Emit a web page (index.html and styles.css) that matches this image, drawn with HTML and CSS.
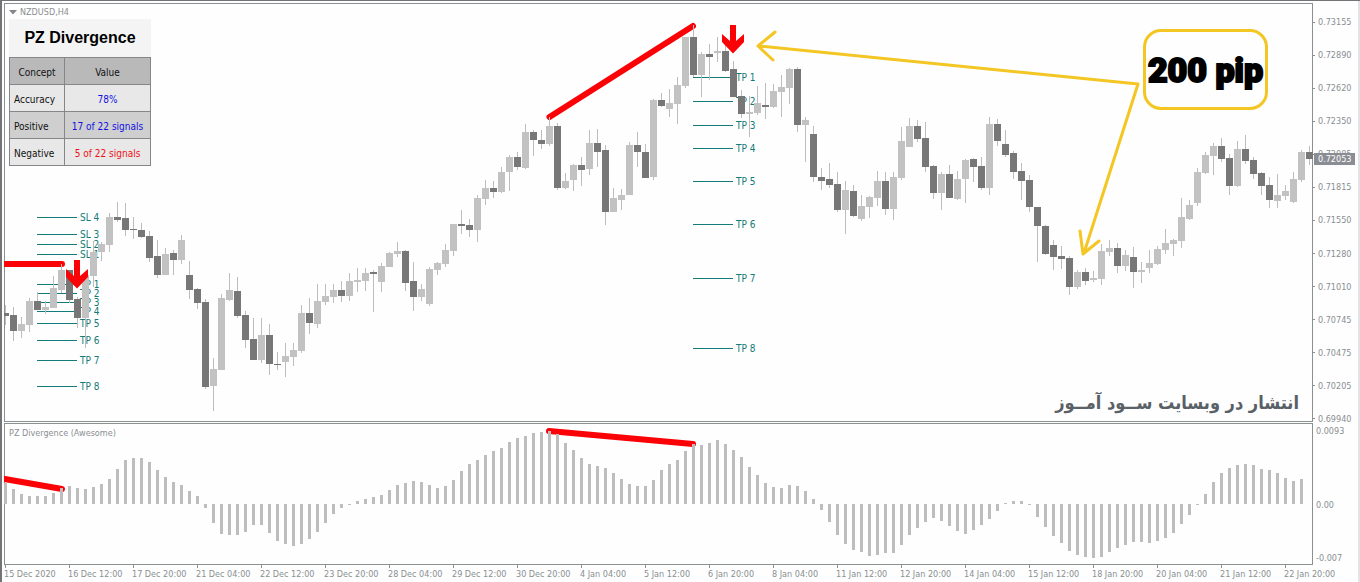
FILE: index.html
```html
<!DOCTYPE html>
<html lang="en">
<head>
<meta charset="utf-8">
<title>NZDUSD,H4</title>
<link rel="stylesheet" href="styles.css">
</head>
<body>
<main class="window">
  <section class="panel price-panel">
    <div class="levels" id="levels"></div>
    <svg class="plot" id="price" viewBox="4 3 1309 419" preserveAspectRatio="none" aria-hidden="true">
      <g class="trend"><path d="M2 264H62M549.500 117L693 26"/></g>
      <g id="candles" shape-rendering="crispEdges"></g>
      <g class="signal">
        <path d="M730 25h6v16l8-7v8L733 53.500L722 42v-8l8 7z"/>
        <path d="M74 260h6v16l8-7v8L77 288.500L66 277v-8l8 7z"/>
      </g>
      <g class="pointer"><path d="M1138 84L759 46M775 32L758 46L773 60M1138 84L1084 253M1080 231L1083 254L1099 241"/></g>
    </svg>
    <div class="overlay">
      <div class="symbol"><svg width="8" height="5" viewBox="0 0 8 5" aria-hidden="true"><path d="M0 0h8L4 4.500z"/></svg>NZDUSD,H4</div>
      <table class="stats">
        <caption>PZ Divergence</caption>
        <thead><tr><th scope="col">Concept</th><th scope="col">Value</th></tr></thead>
        <tbody>
          <tr><td>Accuracy</td><td class="good">78%</td></tr>
          <tr class="alt"><td>Positive</td><td class="good">17 of 22 signals</td></tr>
          <tr><td>Negative</td><td class="bad">5 of 22 signals</td></tr>
        </tbody>
      </table>
    </div>
    <div class="callout">200 pip</div>
    <p class="watermark" lang="fa" dir="rtl">انتشار در وبسایت ســود آمــوز</p>
  </section>
  <div class="price-axis">
    <span>0.73155</span><span>0.72890</span><span>0.72620</span><span>0.72350</span><span>0.72085</span><span>0.71815</span><span>0.71550</span><span>0.71280</span><span>0.71010</span><span>0.70745</span><span>0.70475</span><span>0.70205</span><span>0.69940</span>
    <b class="current">0.72053</b>
  </div>
  <section class="panel osc-panel">
    <svg class="plot" viewBox="4 423 1309 142" preserveAspectRatio="none" aria-hidden="true">
      <g class="trend"><path d="M2 478.500L62 489M549 431L693 444"/></g>
      <g id="bars" shape-rendering="crispEdges"></g>
    </svg>
    <div class="overlay osc-title">PZ Divergence (Awesome)</div>
  </section>
  <div class="osc-axis"><span>0.0093</span><span>0.00</span><span>-0.007</span></div>
  <div class="time-axis">
    <span>15 Dec 2020</span><span>16 Dec 12:00</span><span>17 Dec 20:00</span><span>21 Dec 04:00</span><span>22 Dec 12:00</span><span>23 Dec 20:00</span><span>28 Dec 04:00</span><span>29 Dec 12:00</span><span>30 Dec 20:00</span><span>4 Jan 04:00</span><span>5 Jan 12:00</span><span>6 Jan 20:00</span><span>8 Jan 04:00</span><span>11 Jan 12:00</span><span>12 Jan 20:00</span><span>14 Jan 04:00</span><span>15 Jan 12:00</span><span>18 Jan 20:00</span><span>20 Jan 04:00</span><span>21 Jan 12:00</span><span>22 Jan 20:00</span>
  </div>
</main>
<script src="chart.js"></script>
</body>
</html>
```
FILE: styles.css
```css
* { box-sizing: border-box; }

body {
  margin: 0;
  background: #fefefe;
  color: #8a8e92;
  font: 9px/12px "DejaVu Sans Condensed", "Noto Sans", sans-serif;
}

.window {
  display: grid;
  grid-template-columns: minmax(0, 1fr) 47px;
  grid-template-rows: minmax(0, 419fr) minmax(0, 142fr) 16px;
  row-gap: 1px;
  height: 100vh;
  padding: 2px 0 0 2px;
  border: solid #737378;
  border-width: 1px 0 0 2px;
  box-shadow: inset -2px 0 0 #e4e4e8;
}

.panel {
  position: relative;
  border: 1px solid #8b9090;
}

.panel,
.price-axis,
.osc-axis { min-height: 0; }

.plot,
.levels {
  position: absolute;
  top: -1px;
  left: -1px;
  width: calc(100% + 2px);
  height: calc(100% + 2px);
}

.plot { overflow: hidden; }

.up { fill: #c2c2c2; }
.down { fill: #777; }
.wick { fill: #bdbdbd; }
.bar { fill: #bdbdbd; }

.trend path {
  fill: none;
  stroke: #fb0207;
  stroke-width: 6;
  stroke-linecap: round;
}

.signal path { fill: #fb0207; }

.pointer path {
  fill: none;
  stroke: #f3c623;
  stroke-width: 3;
  stroke-linecap: round;
  stroke-linejoin: round;
}

.level {
  position: absolute;
  display: flex;
  align-items: center;
  gap: 3px;
  height: 13px;
  margin-top: -6px;
  color: #137b74;
  font-size: 10px;
  line-height: 13px;
  white-space: nowrap;
}

.level i {
  flex: none;
  width: 40px;
  height: 1px;
  background: #137b7b;
}

.overlay {
  position: relative;
  padding: 2px 4px;
}

.symbol {
  display: flex;
  align-items: center;
  gap: 3px;
  height: 12px;
}

.symbol path { fill: #85858a; }

.stats {
  width: 142px;
  margin-top: 1px;
  border-collapse: collapse;
  color: #111;
  font-size: 10px;
}

.stats caption {
  height: 38px;
  background: #f4f4f4;
  color: #000;
  font: bold 16px/38px "Liberation Sans", sans-serif;
  text-align: center;
}

.stats th,
.stats td {
  height: 27px;
  padding: 3px 4px 0;
  border: 1px solid #85858a;
  background: #e8e8e8;
  font-weight: normal;
  white-space: nowrap;
}

.stats th:first-child { width: 55px; }
.stats th { background: #b9b9b9; }
.stats .alt td { background: #cfcfcf; }
.stats .good { color: #1212e0; text-align: center; }
.stats .bad { color: #f01018; text-align: center; }

.callout {
  position: absolute;
  top: 6%;
  right: 44px;
  display: flex;
  align-items: center;
  justify-content: center;
  width: 125px;
  height: 81px;
  border: 3px solid #f3c623;
  border-radius: 18px;
  color: #000;
  font: 900 34px/1 "Roboto", sans-serif;
  white-space: nowrap;
  -webkit-text-stroke: 2px #000;
}

.watermark {
  position: absolute;
  right: 13px;
  bottom: 4px;
  margin: 0;
  color: #596066;
  font: bold 18px/28px "DejaVu Sans Condensed", "DejaVu Sans", sans-serif;
  white-space: nowrap;
}

.price-axis {
  position: relative;
  display: flex;
  flex-direction: column;
  justify-content: space-between;
  margin-bottom: -3px;
  padding-top: 13px;
}

.price-axis span,
.osc-axis span {
  display: flex;
  align-items: center;
  gap: 3px;
}

.price-axis span::before {
  width: 2px;
  height: 1px;
  background: #8b9090;
  content: "";
}

.current {
  position: absolute;
  top: 35.5%;
  left: 1px;
  width: 41px;
  height: 12px;
  padding-left: 4px;
  background: #8b8d94;
  color: #fff;
  font-weight: normal;
}

.osc-axis {
  display: flex;
  flex-direction: column;
  justify-content: space-between;
  padding: 2px 3px 1px;
}

.osc-axis span:nth-child(2) { margin-top: 20px; }

.osc-title { padding-top: 3px; }

.time-axis {
  display: flex;
  white-space: nowrap;
}

.time-axis span {
  position: relative;
  flex: 0 0 4.89%;
  padding-top: 2px;
}

.time-axis span::before {
  position: absolute;
  top: -1px;
  left: 1px;
  width: 1px;
  height: 3px;
  background: #8b9090;
  content: "";
}
```
FILE: chart.js
```js
// One candle per entry: direction, body top, body bottom, high, low.
const candles = `D313,316,305,325 D315,331,307,341 L324,331,317,338 L301,325,298,332 D301,310,292,310 L307,310,301,314
L288,308,276,308 L270,290,264,293 D270,300,270,303 D299,318,297,328 L275,318,275,348 L252,276,241,287 L244,252,242,261
L217,245,213,252 D217,220,202,222 D218,230,203,236 D229,230,217,239 D230,237,223,238 D236,258,231,262 D256,275,240,278
L254,275,248,275 D253,260,250,275 L240,260,235,264 D275,290,261,299 D289,303,288,309 D302,387,299,389 L369,386,358,411
L298,370,294,370 L290,300,273,301 D291,316,277,318 D315,340,311,348 D339,360,318,360 L335,360,318,363 D335,364,324,375
D364,365,352,370 L356,362,343,377 L350,357,343,366 L313,351,305,353 D313,323,298,334 L301,324,284,328 L296,302,284,305
L290,297,284,303 D290,296,281,302 L281,296,273,301 L280,282,268,292 L273,281,268,291 D272,274,270,312 L266,282,263,292
L253,267,252,267 L251,254,242,257 D251,283,250,291 D281,297,262,311 L289,297,284,301 L269,304,267,306 L263,270,262,275
L250,264,244,267 L224,251,224,256 D224,226,210,234 D225,230,219,237 L198,230,195,242 L188,199,180,205 D188,192,181,198
L172,192,167,193 L157,172,155,191 D157,167,152,170 L132,168,124,169 D132,140,130,156 D140,144,130,149 L126,144,117,146
D126,188,123,190 L181,188,173,189 L165,180,164,191 D165,170,157,186 L143,169,130,175 D143,152,129,167 D150,212,145,225
L198,212,188,212 L195,200,189,210 L145,195,142,195 D145,152,132,167 D152,178,144,178 L100,177,99,180 D100,106,93,107
L103,109,89,117 L85,104,77,124 L37,86,37,88 D37,75,25,77 L54,75,52,97 D54,57,44,80 L51,53,37,62 D51,71,43,72
D69,97,61,97 D96,114,90,118 L112,114,96,137 L103,113,86,115 D105,107,83,119 L91,107,84,108 L87,92,75,117 L69,88,68,104
D69,125,67,132 L120,125,117,162 D134,177,126,182 D177,181,168,190 D179,185,163,188 D184,210,172,212 L190,210,181,234
D191,216,185,217 L206,219,195,221 L197,207,196,218 L181,198,171,206 D181,209,172,215 L177,209,172,220 L141,178,127,180
L126,147,118,147 D126,139,120,142 D138,167,122,172 D166,193,165,199 L174,193,172,210 D174,198,165,198 L179,199,171,200
L160,179,159,203 D159,167,158,182 D166,188,157,190 L124,188,117,195 D124,141,119,146 D144,155,130,157 D153,172,151,179
D171,181,163,200 D180,207,175,212 D207,226,207,262 D226,254,225,255 D245,257,240,270 D256,259,246,269 D258,287,256,295
L272,287,270,289 D272,281,268,285 L278,280,271,282 L251,279,244,285 L248,252,240,256 D248,266,243,273 L255,266,250,271
D257,272,247,288 L270,272,262,283 L263,268,250,273 L249,264,246,265 L243,250,229,254 L240,244,239,256 L217,241,198,248
L205,219,200,220 L172,203,168,206 L155,173,152,174 L146,156,143,175 D146,159,138,162 D158,186,154,195 L149,186,141,187
D149,161,135,164 D160,174,157,179 D173,186,172,195 D185,200,177,208 L195,201,174,208 L191,196,185,200 L179,202,172,203
L152,180,150,182 D152,159,146,165`.split(/\s+/);

// Free end of each oscillator bar; the zero line is at 504.
const zero = 504;
const bars = [483,489,494,496,496,496,493,488,486,488,489,487,484,479,469,460,458,458,462,470,477,482,485,491,496,508,523,
  534,535,535,532,525,525,533,541,544,546,544,539,532,523,514,508,505,501,499,497,495,490,485,483,481,482,485,488,486,480,
  471,464,460,455,451,448,442,438,436,433,432,431,434,443,450,458,464,466,468,473,479,484,486,486,480,470,464,460,451,444,
  445,443,440,444,450,457,467,475,483,487,488,485,486,491,499,510,522,535,544,550,552,556,555,553,553,545,535,528,522,518,
  521,526,531,534,530,525,519,511,503,501,501,505,517,527,536,543,551,555,557,558,557,552,548,545,542,542,543,541,538,533,
  524,515,505,494,482,473,468,465,464,465,469,470,473,478,481,479];

const rect = (cls, x, y, w, h) =>
  `<rect class="${cls}" x="${x}" y="${y}" width="${w}" height="${h}"/>`;

document.getElementById("candles").innerHTML = candles.map((entry, i) => {
  const [top, bottom, high, low] = entry.slice(1).split(",").map(Number);
  const x = 5 + i * 8;
  return rect("wick", x, high, 1, low - high) +
    rect(entry[0] === "D" ? "down" : "up", x - 3, top, 7, bottom - top);
}).join("");

document.getElementById("bars").innerHTML = bars.map((y, i) =>
  rect("bar", 4 + i * 8, Math.min(y, zero), 3, Math.abs(y - zero))).join("");

const levels = [
  [37, "SL 4", 217], [37, "SL 3", 234], [37, "SL 2", 244], [37, "SL 1", 254],
  [37, "TP 1", 284], [37, "TP 2", 293], [37, "TP 3", 302], [37, "TP 4", 311],
  [37, "TP 5", 323], [37, "TP 6", 340], [37, "TP 7", 360], [37, "TP 8", 386],
  [693, "TP 1", 77], [693, "TP 2", 101], [693, "TP 3", 125], [693, "TP 4", 148],
  [693, "TP 5", 181], [693, "TP 6", 224], [693, "TP 7", 278], [693, "TP 8", 348]
];

document.getElementById("levels").innerHTML = levels.map(([x, name, y]) =>
  `<div class="level" style="left:${(x - 4) / 13.09}%;top:${(y - 3) / 4.19}%"><i></i>${name}</div>`).join("");
```
